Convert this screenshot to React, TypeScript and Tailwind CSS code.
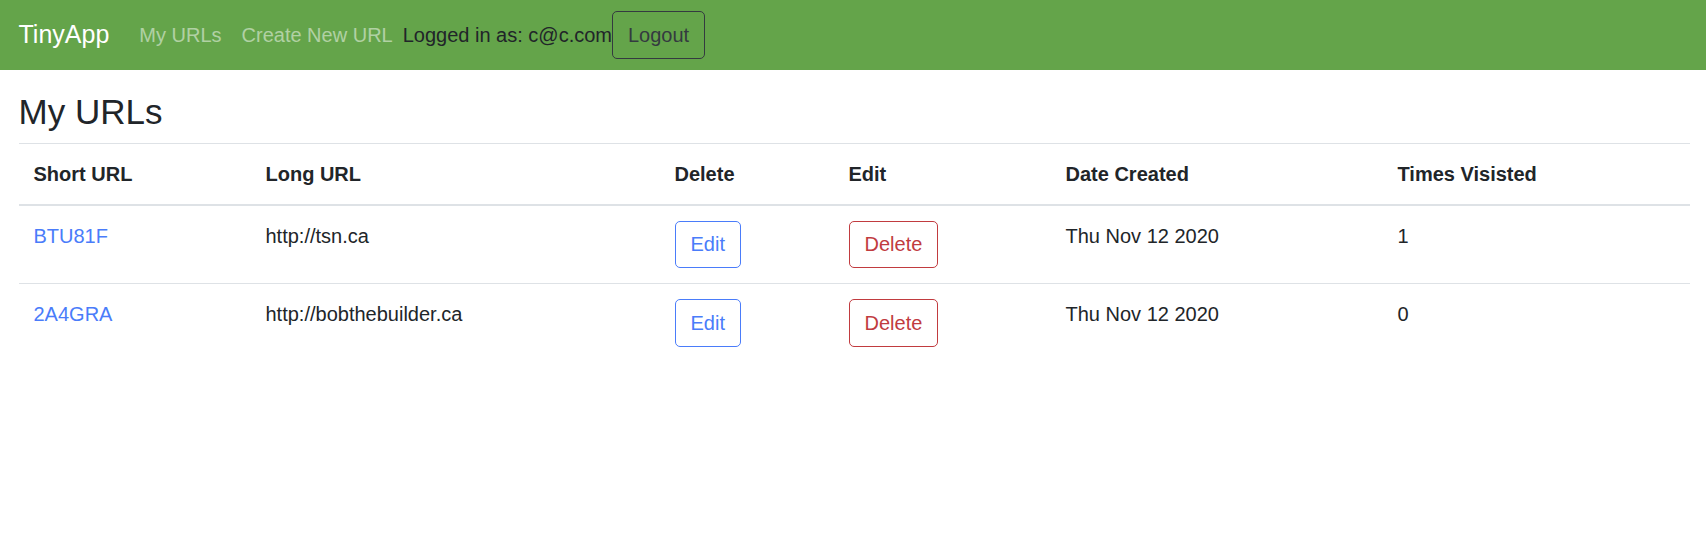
import React from 'react';

const urls = [
  { short: 'BTU81F', long: 'http://tsn.ca', date: 'Thu Nov 12 2020', visits: 1 },
  { short: '2A4GRA', long: 'http://bobthebuilder.ca', date: 'Thu Nov 12 2020', visits: 0 },
];

const cell = 'px-[15px] py-[15px] text-left align-top';

export default function App() {
  return (
    <div className="min-h-[545px] bg-white text-[20px] leading-[1.5] text-[#212529]" style={{ fontFamily: '"Liberation Sans", Arial, sans-serif' }}>
      <nav className="flex h-[70px] items-center bg-[#64a44a] px-[18.5px]">
        <span className="mr-[20px] text-[25px] text-white">TinyApp</span>
        <a className="px-[10px] text-[rgba(255,255,255,0.5)]">My URLs</a>
        <a className="px-[10px] text-[rgba(255,255,255,0.5)]">Create New URL</a>
        <span>Logged in as: c@c.com</span>
        <button className="h-[47.5px] rounded-[5px] border-[1.25px] border-[#343a40] px-[15px] text-[#343a40]">Logout</button>
      </nav>

      <div className="pl-[18.5px] pr-[16px] pt-[20.5px]">
        <h3 className="mb-[10px] text-[35px] font-medium leading-[1.2]">My URLs</h3>
        <table className="w-full border-collapse">
          <thead>
            <tr className="border-t-[1.25px] border-b-[2.5px] border-[#dee2e6]">
              <th className={`${cell} w-[232px] font-bold`}>Short URL</th>
              <th className={`${cell} w-[409px] font-bold`}>Long URL</th>
              <th className={`${cell} w-[174px] font-bold`}>Delete</th>
              <th className={`${cell} w-[217px] font-bold`}>Edit</th>
              <th className={`${cell} w-[332px] font-bold`}>Date Created</th>
              <th className={`${cell} font-bold`}>Times Visisted</th>
            </tr>
          </thead>
          <tbody>
            {urls.map((u, i) => (
              <tr key={u.short} className={i > 0 ? 'border-t-[1.25px] border-[#dee2e6]' : ''}>
                <td className={cell}>
                  <a className="text-[#4a7cfa]">{u.short}</a>
                </td>
                <td className={cell}>{u.long}</td>
                <td className={cell}>
                  <button className="h-[47.5px] rounded-[5px] border-[1.25px] border-[#4a7cfa] px-[15px] text-[#4a7cfa]">Edit</button>
                </td>
                <td className={cell}>
                  <button className="h-[47.5px] rounded-[5px] border-[1.25px] border-[#c13b3f] px-[15px] text-[#c13b3f]">Delete</button>
                </td>
                <td className={cell}>{u.date}</td>
                <td className={cell}>{u.visits}</td>
              </tr>
            ))}
          </tbody>
        </table>
      </div>
    </div>
  );
}
